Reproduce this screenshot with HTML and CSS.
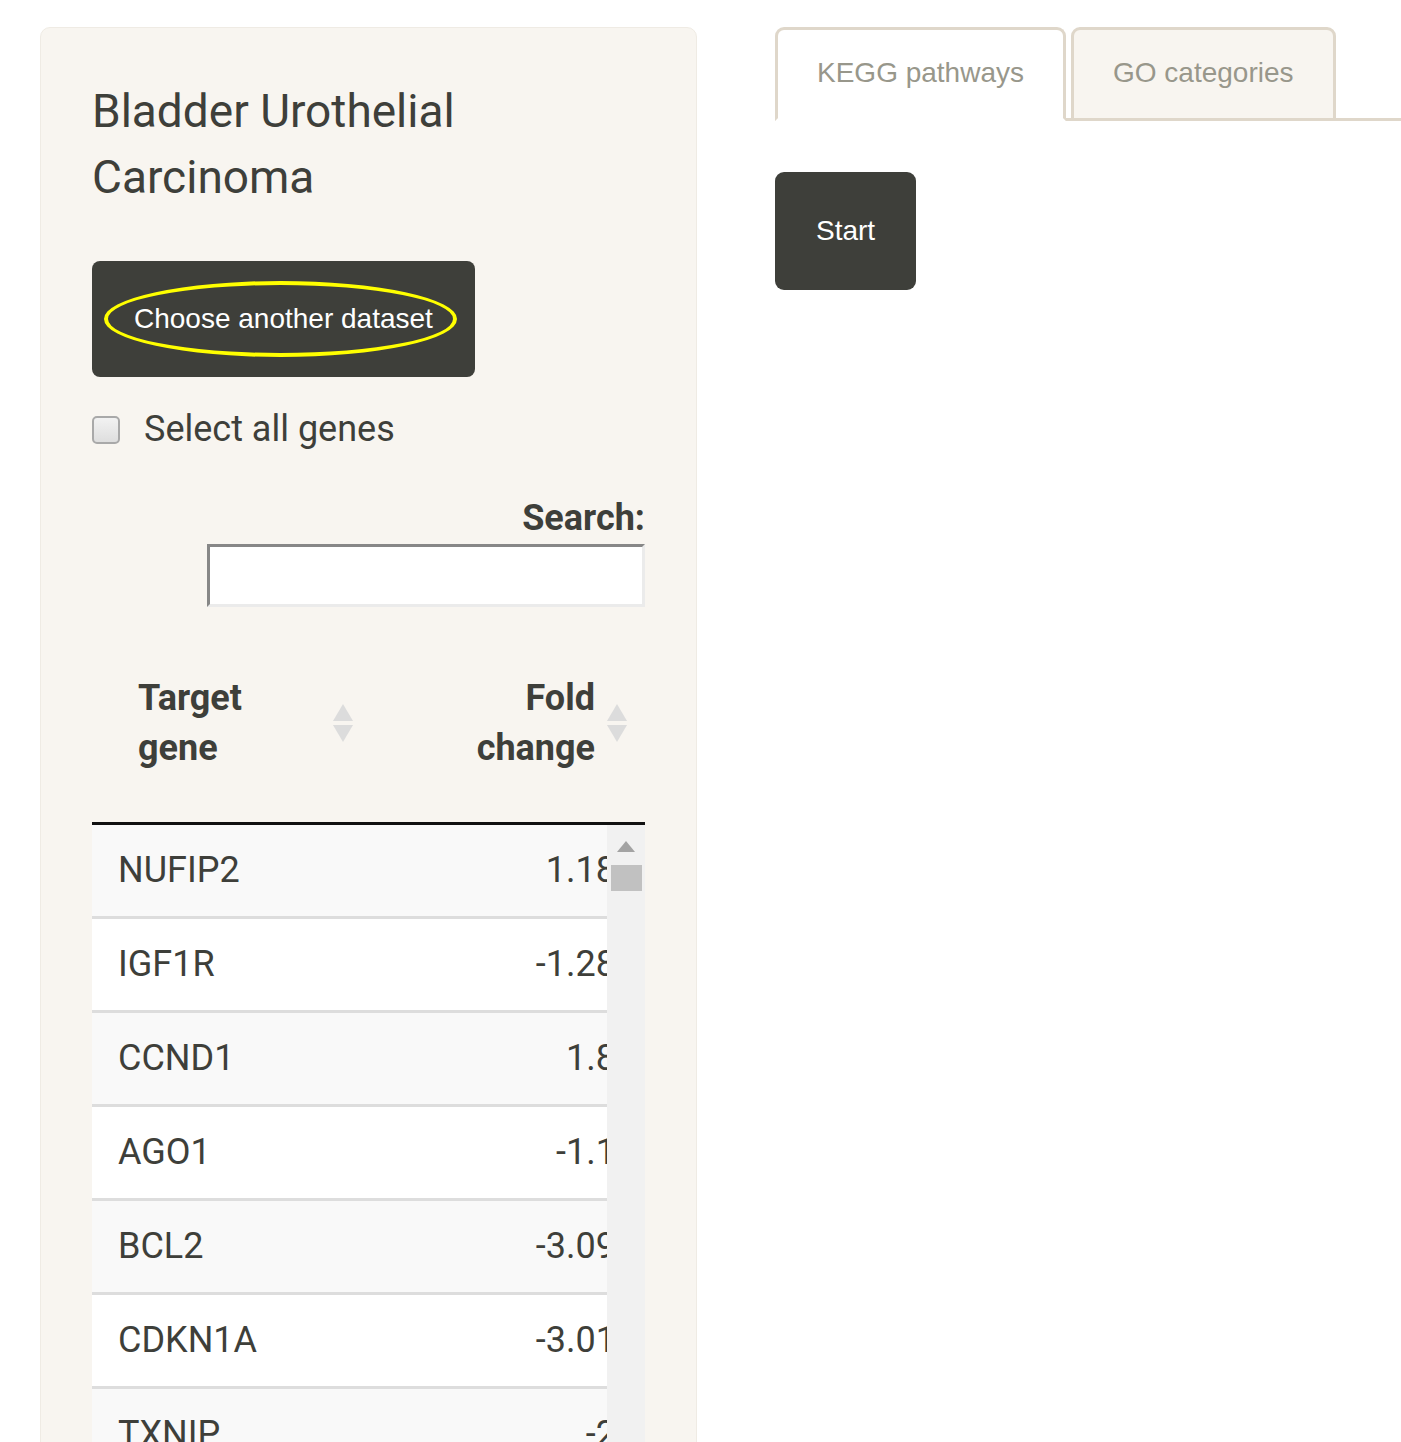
FILE: index.html
```html
<!DOCTYPE html>
<html lang="en">
<head>
  <meta charset="UTF-8">
  <title>Bladder Urothelial Carcinoma</title>
  <link rel="stylesheet" href="styles.css">
</head>
<body>
  <div class="page">
    <aside class="well">
      <h3 class="title">Bladder Urothelial Carcinoma</h3>

      <div class="btn-wrap">
        <button class="btn btn-dataset">Choose another dataset</button>
        <span class="highlight"></span>
      </div>

      <label class="check-row">
        <input type="checkbox" class="check">
        <span>Select all genes</span>
      </label>

      <div class="search">
        <label for="search">Search:</label>
        <input type="search" id="search">
      </div>

      <table class="gene-head">
        <tr>
          <th class="col-gene">Target<br>gene<span class="sort"></span></th>
          <th class="col-fold">Fold<br>change<span class="sort"></span></th>
        </tr>
      </table>

      <div class="scroll-body">
        <div class="table-clip">
          <table class="gene-table">
            <tbody id="gene-rows">
              <tr><td>NUFIP2</td><td class="num">1.18</td></tr>
              <tr><td>IGF1R</td><td class="num">-1.28</td></tr>
              <tr><td>CCND1</td><td class="num">1.8</td></tr>
              <tr><td>AGO1</td><td class="num">-1.1</td></tr>
              <tr><td>BCL2</td><td class="num">-3.09</td></tr>
              <tr><td>CDKN1A</td><td class="num">-3.01</td></tr>
              <tr><td>TXNIP</td><td class="num">-2</td></tr>
              <tr><td>MYC</td><td class="num">1.4</td></tr>
            </tbody>
          </table>
        </div>
        <div class="scrollbar">
          <span class="arrow-up"></span>
          <span class="thumb"></span>
        </div>
      </div>
    </aside>

    <main class="main">
      <ul class="tabs">
        <li class="active"><a href="#">KEGG pathways</a></li>
        <li><a href="#">GO categories</a></li>
      </ul>
      <div class="tab-content">
        <button class="btn btn-start">Start</button>
      </div>
    </main>
  </div>
</body>
</html>
```

FILE: styles.css
```css
/* Sandstone-like shiny layout */
body {
  margin: 0;
  padding: 0;
  background-color: #fff;
  color: #3e3f3a;
  font-family: Roboto, "Liberation Sans", Arial, sans-serif;
  font-size: 36px;
  line-height: 47px;
}

.page {
  display: flex;
  align-items: flex-start;
  padding: 27px 0 0 40px;
}

/* Sidebar */
.well {
  width: 657px;
  box-sizing: border-box;
  min-height: 1500px;
  padding: 50px 51px;
  background-color: #f8f5f0;
  border: 1px solid #efebe4;
  border-radius: 10px;
}

.title {
  margin: 0;
  font-size: 46px;
  font-weight: 400;
  line-height: 66px;
  width: 420px;
}

.btn {
  font-family: "Liberation Sans", Arial, sans-serif;
  font-size: 28px;
  line-height: 32px;
  color: #fff;
  background-color: #3e3f3a;
  border: none;
  cursor: pointer;
}

.btn-wrap {
  position: relative;
  display: inline-block;
  margin-top: 51px;
}

.btn-dataset {
  display: block;
  padding: 42px 42px;
  border-radius: 8px;
}

.highlight {
  position: absolute;
  left: 12px;
  top: 20px;
  width: 345px;
  height: 68px;
  border: 4px solid #ffff00;
  border-radius: 50%;
  pointer-events: none;
}

.check-row {
  display: flex;
  align-items: center;
  gap: 24px;
  margin-top: 29px;
}

.check {
  appearance: none;
  -webkit-appearance: none;
  width: 28px;
  height: 28px;
  margin: 0;
  border: 2px solid #a9a9a9;
  border-radius: 5px;
  background: linear-gradient(#f2f2f2, #dedede);
}

.search {
  margin-top: 42px;
  text-align: right;
}

.search label {
  display: block;
  font-weight: 700;
}

.search input {
  display: block;
  margin: 2px 0 0 auto;
  width: 438px;
  height: 63px;
  box-sizing: border-box;
  background: #fff;
  border-style: solid;
  border-width: 3px;
  border-color: #878787 #ebebeb #ebebeb #878787;
  outline: none;
}

/* Table */
.gene-head {
  width: 100%;
  margin-top: 42px;
  border-collapse: collapse;
  border-bottom: 3px solid #111;
}

.gene-head th {
  position: relative;
  font-weight: 700;
  line-height: 50px;
  padding: 24px 50px 49px 46px;
}

.gene-head .col-gene {
  width: 280px;
  box-sizing: border-box;
  text-align: left;
}

.gene-head .col-fold {
  text-align: right;
}

.sort {
  position: absolute;
  right: 19px;
  top: 55px;
  width: 20px;
  height: 38px;
}

.gene-head .col-fold .sort {
  right: 18px;
}

.sort::before,
.sort::after {
  content: "";
  position: absolute;
  left: 0;
  border-left: 10px solid transparent;
  border-right: 10px solid transparent;
}

.sort::before {
  top: 0;
  border-bottom: 17px solid #dcdcdc;
}

.sort::after {
  bottom: 0;
  border-top: 17px solid #dcdcdc;
}

.scroll-body {
  display: flex;
  height: 640px;
  overflow: hidden;
}

.table-clip {
  width: 516px;
  overflow: hidden;
}

.gene-table {
  width: 540px;
  border-collapse: collapse;
}

.gene-table td {
  padding: 22px 26px;
  border-bottom: 3px solid #dddddd;
  white-space: nowrap;
}

.gene-table td.num {
  text-align: right;
  padding-right: 16px;
}

.gene-table tr:nth-child(odd) {
  background-color: #f9f9f9;
}

.gene-table tr:nth-child(even) {
  background-color: #fff;
}

.scrollbar {
  position: relative;
  width: 38px;
  background-color: #f1f1f1;
}

.arrow-up {
  position: absolute;
  left: 10px;
  top: 16px;
  border-left: 9px solid transparent;
  border-right: 9px solid transparent;
  border-bottom: 11px solid #a3a3a3;
}

.thumb {
  position: absolute;
  left: 4px;
  top: 40px;
  width: 31px;
  height: 26px;
  background-color: #c1c1c1;
}

/* Main panel */
.main {
  flex: 1;
  margin-left: 78px;
}

.tabs {
  display: flex;
  margin: 0;
  padding: 0;
  list-style: none;
  border-bottom: 3px solid #dfd7ca;
}

.tabs li {
  margin: 0 5px -3px 0;
}

.tabs a {
  display: block;
  padding: 27px 39px 29px;
  font-family: "Liberation Sans", Arial, sans-serif;
  font-size: 28px;
  line-height: 32px;
  color: #98978b;
  text-decoration: none;
  background-color: #f8f5f0;
  border: 3px solid #dfd7ca;
  border-radius: 9px 9px 0 0;
}

.tabs li.active a {
  background-color: #fff;
  border-bottom-color: #fff;
}

.tab-content {
  padding-top: 51px;
}

.btn-start {
  padding: 43px 41px;
  border-radius: 9px;
}
```
